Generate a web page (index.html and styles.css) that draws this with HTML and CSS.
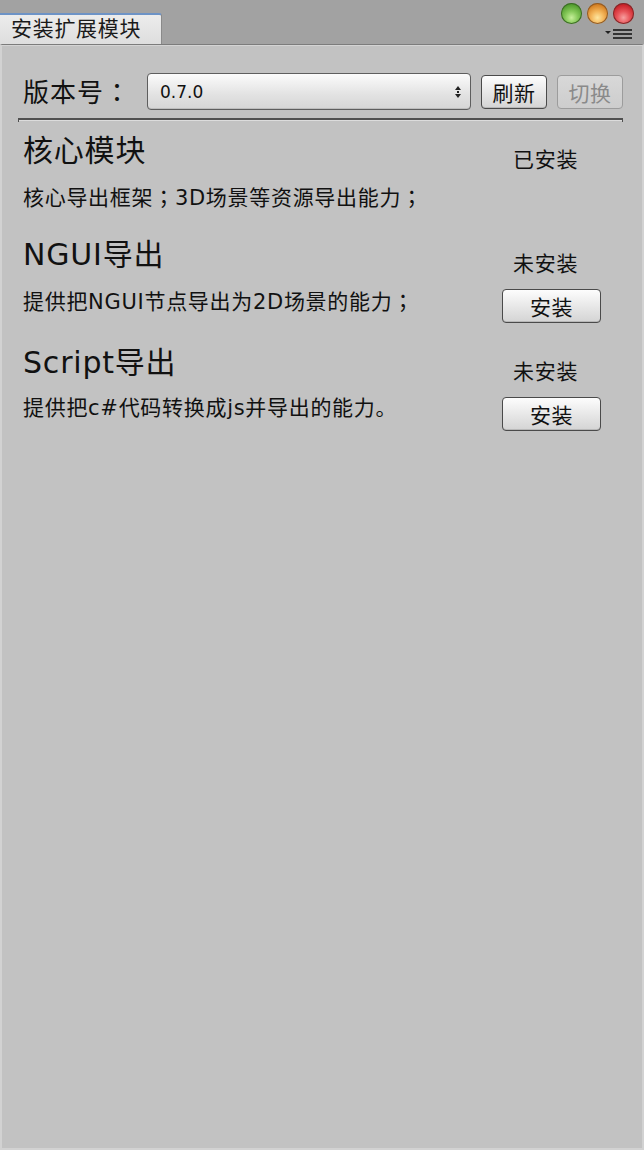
FILE: index.html
```html
<!DOCTYPE html>
<html lang="zh">
<head>
<meta charset="utf-8">
<title>安装扩展模块</title>
<link rel="stylesheet" href="styles.css">
</head>
<body>
<div class="window">
  <div class="titlebar">
    <div class="tab">安装扩展模块</div>
    <div class="controls">
      <div class="lights">
        <span class="light green"></span>
        <span class="light orange"></span>
        <span class="light red"></span>
      </div>
      <div class="menu">
        <svg width="28" height="12" viewBox="0 0 28 12">
          <path d="M0 3 L6 3 L3 6 Z" fill="#222"/>
          <rect x="8" y="1" width="19" height="2" fill="#333"/>
          <rect x="8" y="5" width="19" height="2" fill="#333"/>
          <rect x="8" y="9" width="19" height="2" fill="#333"/>
        </svg>
      </div>
    </div>
  </div>
  <div class="panel">
    <div class="toolbar">
      <div class="label">版本号<span class="punct" lang="ja">：</span></div>
      <div class="select">
        <span class="select-value">0.7.0</span>
        <svg class="select-arrows" width="6" height="12" viewBox="0 0 6 12">
          <path d="M0 4 L3 0 L6 4 Z" fill="#222"/>
          <path d="M0 8 L3 12 L6 8 Z" fill="#222"/>
          <rect x="2" y="5" width="2" height="2" fill="#222"/>
        </svg>
      </div>
      <button class="btn">刷新</button>
      <button class="btn disabled">切换</button>
    </div>
    <div class="separator"></div>
    <div class="modules">
      <div class="module">
        <div class="row-top">
          <div class="title">核心模块</div>
          <div class="status">已安装</div>
        </div>
        <div class="row-bottom">
          <div class="desc">核心导出框架<span class="punct" lang="ja">；</span>3D场景等资源导出能力<span class="punct" lang="ja">；</span></div>
        </div>
      </div>
      <div class="module">
        <div class="row-top">
          <div class="title">NGUI导出</div>
          <div class="status">未安装</div>
        </div>
        <div class="row-bottom">
          <div class="desc">提供把NGUI节点导出为2D场景的能力<span class="punct" lang="ja">；</span></div>
          <button class="btn install">安装</button>
        </div>
      </div>
      <div class="module">
        <div class="row-top">
          <div class="title">Script导出</div>
          <div class="status">未安装</div>
        </div>
        <div class="row-bottom">
          <div class="desc">提供把c#代码转换成js并导出的能力。</div>
          <button class="btn install">安装</button>
        </div>
      </div>
    </div>
  </div>
</div>
</body>
</html>
```
FILE: styles.css
```css
* { box-sizing: border-box; }
html, body {
  margin: 0;
  padding: 0;
  width: 644px;
  height: 1150px;
  overflow: hidden;
  background: #a2a2a2;
  font-family: "DejaVu Sans", "Noto Sans CJK SC", sans-serif;
  color: #111;
}
.window {
  width: 644px;
  height: 1150px;
  display: flex;
  flex-direction: column;
}
.titlebar {
  height: 44px;
  display: flex;
  justify-content: space-between;
  align-items: flex-end;
  background: #a2a2a2;
}
.tab {
  width: 162px;
  height: 31px;
  background: linear-gradient(#ececec, #dedede);
  border-top: 2px solid #6d93c6;
  border-right: 1px solid #8a8a8a;
  border-top-right-radius: 3px;
  padding-left: 11px;
  font-size: 21px;
  line-height: 29px;
  color: #1a1a1a;
  letter-spacing: 0.7px;
}
.controls {
  align-self: stretch;
  display: flex;
  flex-direction: column;
  align-items: flex-end;
  padding-top: 3px;
  padding-right: 10px;
}
.lights {
  display: flex;
  gap: 5px;
}
.light {
  width: 21px;
  height: 21px;
  border-radius: 50%;
  display: block;
}
.green {
  background: radial-gradient(circle at 50% 70%, #c6ef9a 0%, #86c95a 35%, #4f9a2c 75%, #2f6a18 100%);
  box-shadow: inset 0 0 0 1px #3d6a28;
}
.orange {
  background: radial-gradient(circle at 50% 70%, #fde6a0 0%, #f3b55a 35%, #d07a1e 75%, #8a4a10 100%);
  box-shadow: inset 0 0 0 1px #8d5a28;
}
.red {
  background: radial-gradient(circle at 50% 70%, #f7a0a0 0%, #e8555a 35%, #c51e24 75%, #7a1012 100%);
  box-shadow: inset 0 0 0 1px #7e2a2a;
}
.menu {
  margin-top: 4px;
  margin-right: 1px;
  height: 12px;
  line-height: 0;
}
.panel {
  flex: 1;
  background: #c2c2c2;
  border-top: 1px solid #7c7c7c;
  border-left: 2px solid #d2d2d2;
  border-right: 2px solid #d2d2d2;
  border-bottom: 2px solid #d2d2d2;
  box-shadow: inset 0 1px 0 #d4d4d4;
  padding: 28px 19px 0 16px;
}
.punct {
  font-family: "Noto Sans CJK JP", sans-serif;
}
.toolbar {
  display: flex;
  align-items: center;
  height: 37px;
}
.label {
  width: 124px;
  padding-left: 5px;
  font-size: 26px;
  line-height: 37px;
  letter-spacing: 1px;
  white-space: nowrap;
}
.select {
  margin-left: 5px;
  width: 324px;
  height: 37px;
  border: 1px solid #5e5e5e;
  border-radius: 4px;
  background: linear-gradient(#fbfbfb, #e2e2e2 60%, #d6d6d6);
  box-shadow: inset 0 -1px 0 #bdbdbd;
  display: flex;
  align-items: center;
  justify-content: space-between;
  padding: 0 9px 0 12px;
}
.select-value {
  font-size: 17px;
  line-height: 20px;
}
.select-arrows {
  display: block;
}
.btn {
  font-family: "Noto Sans CJK SC", sans-serif;
  font-size: 21px;
  color: #111;
  height: 34px;
  width: 66px;
  padding: 0;
  margin-left: 10px;
  border: 1px solid #4a4a4a;
  border-radius: 4px;
  background: linear-gradient(#fdfdfd, #e6e6e6 55%, #d4d4d4);
  box-shadow: inset 0 -1px 0 #b8b8b8;
  line-height: 30px;
  letter-spacing: 0.5px;
}
.btn.disabled {
  color: #8a8a8a;
  border-color: #9c9c9c;
  background: linear-gradient(#d8d8d8, #cdcdcd);
  box-shadow: none;
}
.separator {
  margin-top: 8px;
  height: 4px;
  border-top: 2px solid #505050;
  border-left: 1px solid #505050;
  border-right: 1px solid #505050;
  background: linear-gradient(#dcdcdc 0, #dcdcdc 1px, transparent 1px);
}
.modules {
  padding-top: 8px;
  padding-left: 5px;
  padding-right: 22px;
}
.module {
  display: flex;
  flex-direction: column;
  gap: 11px;
  padding-bottom: 19px;
}
.row-top {
  display: flex;
  justify-content: space-between;
  height: 40px;
}
.title {
  font-size: 30px;
  line-height: 41px;
  letter-spacing: 0.8px;
  white-space: nowrap;
}
.status {
  width: 99px;
  padding-left: 11px;
  margin-top: 18px;
  font-size: 21px;
  line-height: 24px;
  letter-spacing: 0.8px;
}
.row-bottom {
  display: flex;
  justify-content: space-between;
  align-items: flex-start;
  min-height: 34px;
}
.desc {
  font-size: 21px;
  line-height: 30px;
  letter-spacing: 0.7px;
  white-space: nowrap;
}
.btn.install {
  width: 99px;
  margin-top: 4px;
  margin-left: 0;
}
```
